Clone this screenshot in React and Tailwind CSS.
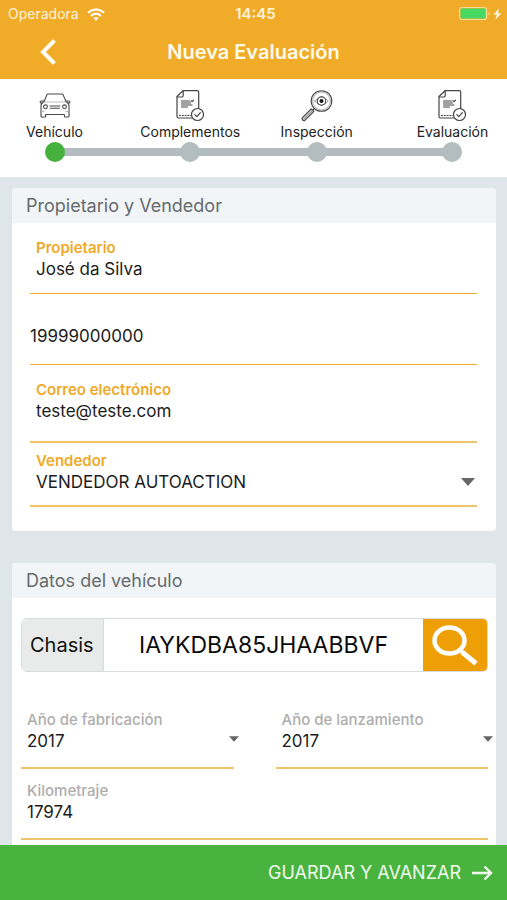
import { useState } from "react";

function CarIcon() {
  return (
    <svg viewBox="0 0 32 32" className="w-8 h-8" fill="none" stroke="#4a4a4a" strokeWidth="1.1" strokeLinejoin="round" strokeLinecap="round" aria-hidden="true">
      <path d="M5 11.500 8 4.600Q8.400 4 9.200 4h13.600q.8 0 1.200.6l3 6.900" />
      <path d="M5 11.500q-3 1.500-3 4.500v10.200q0 .8.8.8h3q.8 0 .8-.8V24.500h18.800v1.700q0 .8.8.8h3q.8 0 .8-.8V16q0-3-3-4.500" />
      <path d="M4.800 11H2.200q-1.200 0-1 1.100.2 1.100 1.800 1.200M27.200 11h2.600q1.200 0 1 1.100-.2 1.100-1.800 1.200" />
      <circle cx="6.500" cy="16.800" r="1.900" />
      <circle cx="25.500" cy="16.800" r="1.900" />
      <path d="M11 16h10M11.500 18.300h9" />
      <path d="M5 12h22M2.200 21.500h3M26.800 21.500h3" stroke="#a8a8a8" strokeWidth=".8" />
    </svg>
  );
}

function ReportIcon() {
  return (
    <svg viewBox="0 0 32 32" className="w-8 h-8" fill="none" stroke="#454545" strokeWidth="1.200" strokeLinejoin="round" strokeLinecap="round" aria-hidden="true">
      <path d="M18 28H4.500Q3 28 3 26.500V6.500L9 .7h14.200q1.500 0 1.500 1.500V19" />
      <path d="M3.200 7h4.600Q9.200 7 9.200 5.600V.9" />
      <path d="M7.500 11h8M17 10.800l1 .8 1.500-1.400M7.500 13h9M7.500 15h10.500M7.500 17h6" />
      <path d="M5.500 25.500H17" strokeDasharray="1 1.800" />
      <circle cx="23.500" cy="24.500" r="6" fill="#fff" />
      <path d="m20.800 24.700 2 2 3.600-4" />
    </svg>
  );
}

function InspectIcon() {
  return (
    <svg viewBox="0 0 32 32" className="w-8 h-8" fill="none" stroke="#454545" strokeWidth="1.100" strokeLinejoin="round" strokeLinecap="round" aria-hidden="true">
      <circle cx="20.500" cy="11" r="10.300" />
      <circle cx="20.500" cy="11" r="8.900" stroke="#9a9a9a" strokeWidth=".8" />
      <path d="M13.800 11q6.700-8.500 13.400 0-6.700 8.500-13.400 0z" stroke="#888" strokeWidth=".8" />
      <circle cx="20.500" cy="11" r="4.200" />
      <circle cx="20.500" cy="11" r="2" fill="#111" stroke="none" />
      <path d="m13.500 18.500-1.500 1.500" />
      <path d="M10.200 18.800 1.400 27.600q-.8 1.300.2 2.400 1.200 1.100 2.500.2l8.800-8.800z" fill="#d0d0d0" />
      <path d="M11 20.800 3.200 28.600" stroke="#777" strokeWidth=".8" />
    </svg>
  );
}

const STEPS = [
  { label: "Vehículo", Icon: CarIcon, active: true, className: "" },
  { label: "Complementos", Icon: ReportIcon, className: "pl-[18px]" },
  { label: "Inspección", Icon: InspectIcon, className: "pr-[18px]" },
  { label: "Evaluación", Icon: ReportIcon, className: "" },
];

function StatusBar() {
  return (
    <div className="grid grid-cols-3 items-center h-7 pl-2 pr-1 text-[#fff3d6]">
      <div className="flex items-center gap-2 text-sm">
        <span>Operadora</span>
        <svg viewBox="0 0 18 13" className="w-[18px] h-[13px]" fill="none" stroke="#fffdf5" strokeWidth="2.200" aria-hidden="true">
          <path d="M1 4.700Q9-2 17 4.700" />
          <path d="M4 7.800Q9 3.600 14 7.800" />
          <path d="M9 12.800 6.300 10Q9 7.900 11.700 10z" fill="#fffdf5" stroke="none" />
        </svg>
      </div>
      <span className="text-center text-[15px] font-semibold">14:45</span>
      <svg viewBox="0 0 44 16" className="w-11 h-4 justify-self-end" aria-hidden="true">
        <rect x=".5" y="1.500" width="27" height="12" rx="2.500" fill="none" stroke="#f8dc98" strokeWidth="1.200" />
        <rect x="1.500" y="2.500" width="25" height="10" rx="1" fill="#47d964" />
        <path d="M29.500 6v3.500q1.300-.6 1.300-1.750T29.500 6z" fill="#f8dc98" />
        <path d="M40 2.500 34.500 8.500h3.300L36.500 13.500l5.800-6.300h-3.400z" fill="#fffdf5" />
      </svg>
    </div>
  );
}

function Header() {
  return (
    <header className="bg-[#f0ac28]">
      <StatusBar />
      <div className="grid grid-cols-[80px_1fr_80px] items-center h-12 mb-[3px] text-[#fffbea]">
        <button type="button" aria-label="Volver" className="flex justify-end pr-6">
          <svg viewBox="0 0 16 26" className="w-4 h-[26px]" fill="none" stroke="#fffdf5" strokeWidth="4" aria-hidden="true">
            <path d="M14.500 1.500 3 13l11.500 11.500" />
          </svg>
        </button>
        <h1 className="text-center text-xl font-semibold">Nueva Evaluación</h1>
      </div>
    </header>
  );
}

function Stepper() {
  return (
    <nav aria-label="Pasos" className="bg-white pt-[11px] pb-[15px]">
      <ol className="relative grid grid-cols-[21.5%_28.5%_28.5%_21.5%]">
        <li aria-hidden="true" className="absolute inset-x-[11%] bottom-[6px] h-2 bg-[#b3bcbe]" />
        {STEPS.map(({ label, Icon, active, className }) => (
          <li key={label} aria-current={active ? "step" : undefined} className={`flex flex-col items-center ${className}`}>
            <Icon />
            <span className="text-sm leading-5 text-[#222]">{label}</span>
            <span className={`relative size-5 rounded-full ${active ? "bg-[#45b13c]" : "bg-[#b3bcbe]"}`} />
          </li>
        ))}
      </ol>
    </nav>
  );
}

function Card({ title, className = "", children }) {
  return (
    <section className={`bg-white ${className}`}>
      <h2 className="rounded-t bg-[#f1f5f7] pl-[14px] text-lg leading-[35px] text-[#666a6d]">{title}</h2>
      {children}
    </section>
  );
}

function Arrow({ className }) {
  return (
    <svg viewBox="0 0 14 8" className={`absolute pointer-events-none ${className}`} fill="#666" aria-hidden="true">
      <path d="M0 0h14L7 8z" />
    </svg>
  );
}

function Field({ id, label, type = "text", labelClass, className, ...rest }) {
  return (
    <div className={`flex flex-col px-[6px] ${className}`}>
      <label htmlFor={id} className={`text-[15px] leading-5 ${labelClass}`}>{label}</label>
      <input id={id} type={type} className="w-full h-6 bg-transparent text-[17px] text-[#1c1c1c] outline-none" {...rest} />
    </div>
  );
}

function SelectField({ id, label, options, labelClass, className, arrowClass }) {
  return (
    <div className={`relative flex flex-col px-[6px] ${className}`}>
      <label htmlFor={id} className={`text-[15px] leading-5 ${labelClass}`}>{label}</label>
      <select id={id} className="w-full h-[22px] appearance-none bg-transparent text-[17px] leading-[22px] text-[#1c1c1c] outline-none">
        {options.map((o) => (
          <option key={o}>{o}</option>
        ))}
      </select>
      <Arrow className={arrowClass} />
    </div>
  );
}

const ORANGE_LABEL = "font-semibold text-[#efa927]";
const GRAY_LABEL = "font-medium text-[#adadad]";

export default function App() {
  const [chasis, setChasis] = useState("IAYKDBA85JHAABBVF");

  return (
    <div className="flex flex-col min-h-screen bg-[#dee6e9] font-['Inter',sans-serif]">
      <Header />
      <Stepper />

      <main className="flex flex-col flex-1 gap-8 pt-[11px] pl-3 pr-[11px]">
        <Card title="Propietario y Vendedor" className="rounded pb-6">
          <div className="pl-[18px] pr-[19px]">
            <Field id="propietario" label="Propietario" defaultValue="José da Silva" labelClass={ORANGE_LABEL} className="pt-[15px] pb-[11px] border-b border-[#f0ac28]" />
            <div className="pt-[31px] pb-[15px] border-b border-[#f0ac28]">
              <input type="tel" aria-label="Teléfono" defaultValue="19999000000" className="block w-full h-6 bg-transparent text-[17px] text-[#1c1c1c] outline-none" />
            </div>
            <Field id="correo" label="Correo electrónico" type="email" defaultValue="teste@teste.com" labelClass={ORANGE_LABEL} className="pt-[15px] pb-[17px] border-b-2 border-[#efc468]" />
            <SelectField id="vendedor" label="Vendedor" options={["VENDEDOR AUTOACTION"]} labelClass={ORANGE_LABEL} className="pt-2 pb-3 border-b-2 border-[#efc468]" arrowClass="w-[14px] h-2 right-[2px] bottom-[19px]" />
          </div>
        </Card>

        <Card title="Datos del vehículo" className="flex-1 rounded-t pb-1">
          <div className="pl-[9px] pr-2">
            <div className="flex h-[54px] mt-5 mb-[38px] border border-[#d9dcdc] rounded-md">
              <label htmlFor="chasis" className="flex items-center w-[82px] pl-2 rounded-l-md border-r border-[#d9dcdc] bg-[#e9eaea] text-xl text-[#111]">
                Chasis
              </label>
              <input id="chasis" value={chasis} onChange={(e) => setChasis(e.target.value)} className="flex-1 min-w-0 text-center text-[23px] text-[#0c0c0c] outline-none" />
              <button type="button" aria-label="Buscar chasis" className="flex items-center justify-center w-16 rounded-r-sm bg-[#ee9f05]">
                <svg viewBox="0 0 48 42" className="w-12 h-[42px]" fill="none" stroke="#fff" aria-hidden="true">
                  <ellipse cx="18.500" cy="16.500" rx="15" ry="13" strokeWidth="4.500" />
                  <path d="m29.500 26.500 3 2.500" strokeWidth="3.500" />
                  <path d="m31 28 14 11.500" strokeWidth="5" />
                </svg>
              </button>
            </div>
            <div className="grid grid-cols-2 gap-[42px]">
              <SelectField id="fabricacion" label="Año de fabricación" options={["2017"]} labelClass={GRAY_LABEL} className="pb-[15px] border-b-2 border-[#efc468]" arrowClass="w-[10px] h-[6px] right-[-5px] bottom-[25px]" />
              <SelectField id="lanzamiento" label="Año de lanzamiento" options={["2017"]} labelClass={GRAY_LABEL} className="pb-[15px] border-b-2 border-[#efc468]" arrowClass="w-[10px] h-[6px] right-[-5px] bottom-[25px]" />
            </div>
            <Field id="kilometraje" label="Kilometraje" inputMode="numeric" defaultValue="17974" labelClass={GRAY_LABEL} className="pt-3 pb-[13px] border-b-2 border-[#efc468]" />
          </div>
        </Card>
      </main>

      <footer className="sticky bottom-0 bg-[#49b33f]">
        <button type="button" className="flex items-center justify-end gap-[10px] w-full h-[55px] pr-[14px] text-lg text-[#f2fbef]">
          GUARDAR Y AVANZAR
          <svg viewBox="0 0 22 16" className="w-[22px] h-4" fill="none" stroke="currentColor" strokeWidth="2.400" aria-hidden="true">
            <path d="M1 8h19M13.500 1.500 20 8l-6.500 6.500" />
          </svg>
        </button>
      </footer>
    </div>
  );
}
